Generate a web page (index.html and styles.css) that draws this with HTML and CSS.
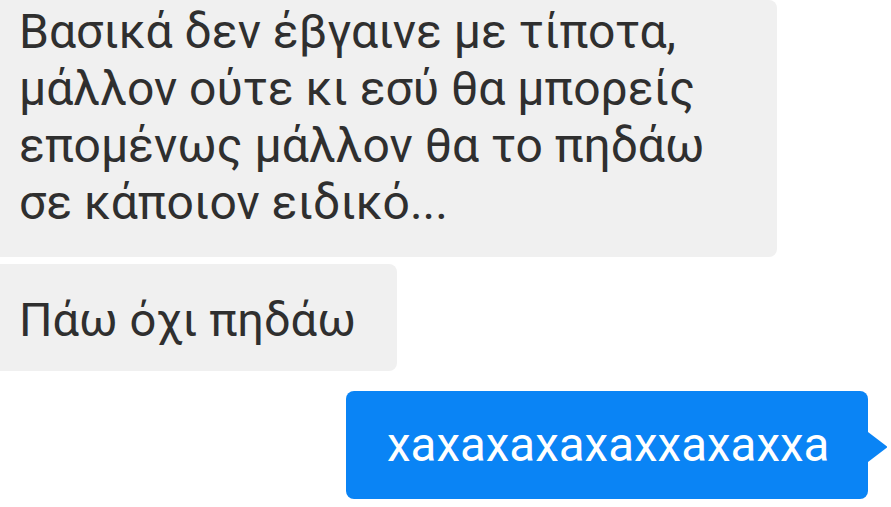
FILE: index.html
```html
<!DOCTYPE html>
<html lang="el">
<head>
<meta charset="utf-8">
<link rel="stylesheet" href="styles.css">
</head>
<body>
<div class="chat">
  <div class="bubble in first">Βασικά δεν έβγαινε με τίποτα,<br>μάλλον ούτε κι εσύ θα μπορείς<br>επομένως μάλλον θα το πηδάω<br>σε κάποιον ειδικό...</div>
  <div class="bubble in second">Πάω όχι πηδάω</div>
  <div class="bubble out">xaxaxaxaxaxxaxaxxa</div>
</div>
</body>
</html>
```
FILE: styles.css
```css
html, body {
  margin: 0;
  padding: 0;
  background: #ffffff;
}
.chat {
  display: flex;
  flex-direction: column;
  align-items: flex-start;
  font-family: Roboto, "Noto Sans", sans-serif;
  font-size: 46px;
  line-height: 57px;
}
.bubble {
  box-sizing: border-box;
  white-space: nowrap;
}
.in {
  background: #f0f0f0;
  color: #2f2f2f;
  border-radius: 0 8px 8px 0;
  padding-left: 19px;
}
.first {
  width: 777px;
  font-size: 48px;
  padding-top: 3px;
  padding-bottom: 26px;
}
.second {
  margin-top: 7px;
  width: 397px;
  height: 107px;
  font-size: 47px;
  padding-top: 27px;
}
.out {
  position: relative;
  margin-top: 20px;
  margin-left: 346px;
  width: 522px;
  height: 108px;
  font-size: 47.5px;
  padding: 26px 0 0 41px;
  background: #0a84f5;
  color: #ffffff;
  border-radius: 8px;
}
.out::after {
  content: "";
  position: absolute;
  left: 100%;
  top: 41px;
  width: 19px;
  height: 30px;
  background: #0a84f5;
  clip-path: polygon(0 0, 100% 48%, 100% 52%, 0 100%);
}
```
